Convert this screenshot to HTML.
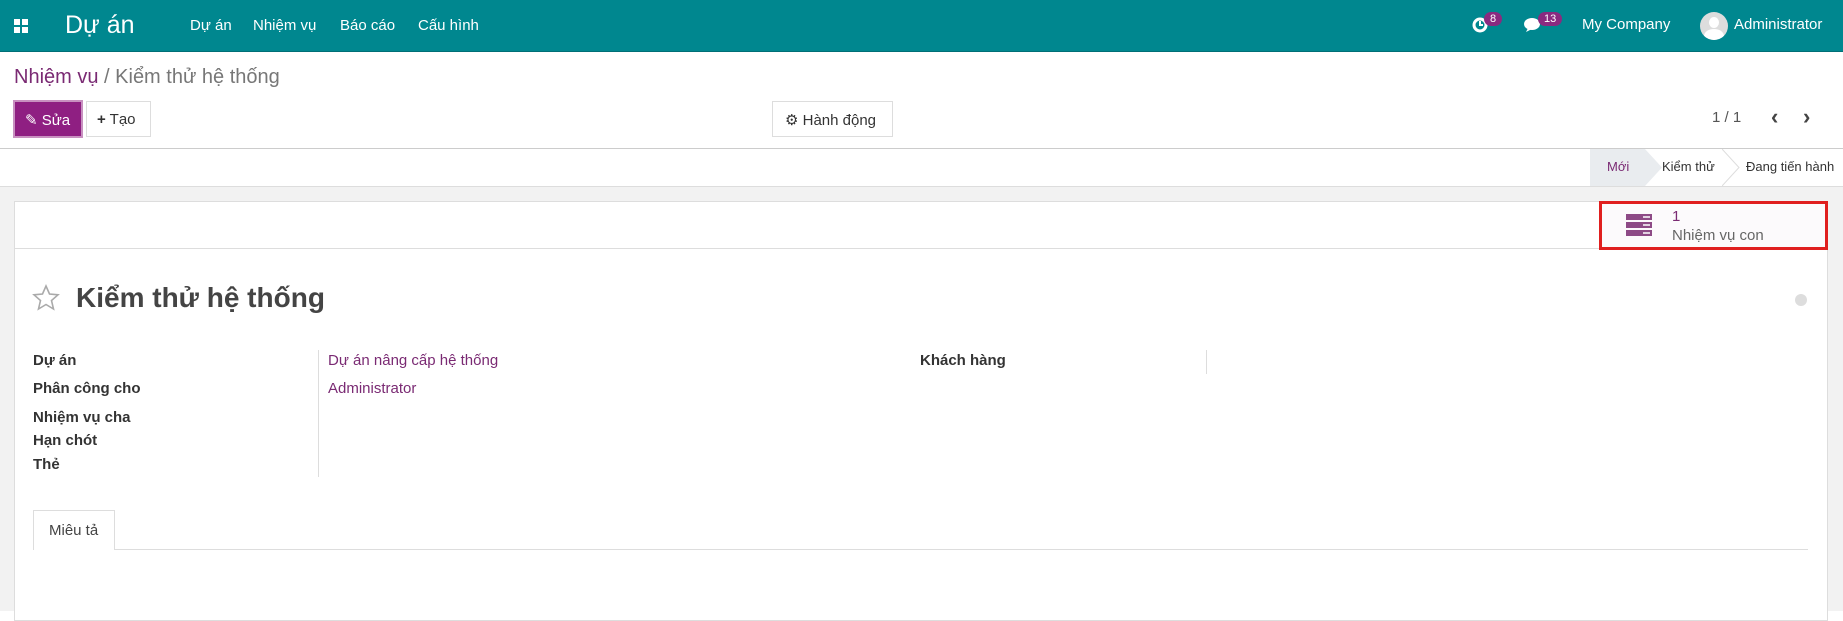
<!DOCTYPE html>
<html><head><meta charset="utf-8"><style>
*{box-sizing:border-box;margin:0;padding:0}
body{width:1843px;height:611px;overflow:hidden;font-family:"Liberation Sans",sans-serif;background:#fff;position:relative;color:#4c4c4c}
.a{position:absolute;white-space:nowrap}
.nav{left:0;top:0;width:1843px;height:52px;background:#00878f;border-bottom:1px solid #006f76}
.nav .a{color:#fff}
.pu{color:#7a2a73}
.lbl{font-weight:bold;font-size:15px;color:#333}
.badge{background:#8a2a80;color:#fff;border-radius:9px;font-size:11px;padding:1px 6px}
</style></head><body>
<div class="a nav">
  <svg class="a" style="left:14px;top:19px" width="14" height="14"><rect x="0" y="0" width="6" height="6" fill="#fff"/><rect x="8" y="0" width="6" height="6" fill="#fff"/><rect x="0" y="8" width="6" height="6" fill="#fff"/><rect x="8" y="8" width="6" height="6" fill="#fff"/></svg>
  <div class="a" style="left:65px;top:11px;font-size:25px">Dự án</div>
  <div class="a" style="left:190px;top:17px;font-size:15px">Dự án</div>
  <div class="a" style="left:253px;top:17px;font-size:15px">Nhiệm vụ</div>
  <div class="a" style="left:340px;top:17px;font-size:15px">Báo cáo</div>
  <div class="a" style="left:418px;top:17px;font-size:15px">Cấu hình</div>
  <svg class="a" style="left:1472px;top:17px" width="16" height="16"><circle cx="8" cy="8" r="6" fill="none" stroke="#fff" stroke-width="3"/><path d="M8 4v4h3" stroke="#fff" stroke-width="2" fill="none"/></svg>
  <div class="a badge" style="left:1484px;top:12px">8</div>
  <svg class="a" style="left:1524px;top:17px" width="18" height="16"><ellipse cx="8" cy="7" rx="8" ry="6" fill="#fff"/><path d="M4 11l-2 4 6-3z" fill="#fff"/></svg>
  <div class="a badge" style="left:1538px;top:12px">13</div>
  <div class="a" style="left:1582px;top:16px;font-size:15px">My Company</div>
  <div class="a" style="left:1700px;top:12px;width:28px;height:28px;border-radius:50%;background:#ddd;overflow:hidden"><div class="a" style="left:9px;top:5px;width:10px;height:11px;border-radius:50%;background:#fff"></div><div class="a" style="left:4px;top:17px;width:20px;height:14px;border-radius:50%;background:#fff"></div></div>
  <div class="a" style="left:1734px;top:16px;font-size:15px">Administrator</div>
</div>
<div class="a" style="left:14px;top:66px;font-size:20px;color:#777"><span class="pu">Nhiệm vụ</span> / Kiểm thử hệ thống</div>
<div class="a" style="left:13px;top:100px;width:70px;height:38px;background:#8f1f82;border:2px solid #c890c0;color:#fff;font-size:15px;padding:9px 0 0 10px">✎ Sửa</div>
<div class="a" style="left:86px;top:101px;width:65px;height:36px;border:1px solid #ddd;font-size:15px;color:#333;padding:9px 0 0 10px"><b>+</b> Tạo</div>
<div class="a" style="left:772px;top:101px;width:121px;height:36px;border:1px solid #ddd;font-size:15px;color:#333;padding:9px 0 0 12px">⚙ Hành động</div>
<div class="a" style="left:1712px;top:109px;font-size:15px;color:#555">1 / 1</div>
<div class="a" style="left:1771px;top:104px;font-size:22px;color:#444;font-weight:bold">‹</div>
<div class="a" style="left:1803px;top:104px;font-size:22px;color:#444;font-weight:bold">›</div>
<div class="a" style="left:0;top:148px;width:1843px;height:1px;background:#ccc"></div>
<div class="a" style="left:1590px;top:149px;width:55px;height:37px;background:#e9ecef"></div>
<svg class="a" style="left:1645px;top:149px" width="20" height="37"><path d="M0 0L17 18.5 0 37z" fill="#e9ecef"/></svg>
<svg class="a" style="left:1722px;top:149px" width="20" height="37"><path d="M0 0L17 18.5 0 37" fill="none" stroke="#ddd"/></svg>
<div class="a" style="left:1607px;top:159px;font-size:13px;color:#7a2a73">Mới</div>
<div class="a" style="left:1662px;top:159px;font-size:13px;color:#333">Kiểm thử</div>
<div class="a" style="left:1746px;top:159px;font-size:13px;color:#333">Đang tiến hành</div>
<div class="a" style="left:0;top:186px;width:1843px;height:425px;background:#f2f2f2;border-top:1px solid #ddd"></div>
<div class="a" style="left:14px;top:201px;width:1814px;height:420px;background:#fff;border:1px solid #ddd"></div>
<div class="a" style="left:14px;top:248px;width:1814px;height:1px;background:#ddd"></div>
<div class="a" style="left:1599px;top:201px;width:229px;height:49px;border:3px solid #e01f1f;background:#fcfafc"></div>
<svg class="a" style="left:1626px;top:214px" width="26" height="22"><rect x="0" y="0" width="26" height="6" fill="#8d4a86"/><rect x="0" y="8" width="26" height="6" fill="#8d4a86"/><rect x="0" y="16" width="26" height="6" fill="#8d4a86"/><path d="M17 3h7M17 11h7M17 19h7" stroke="#fff" stroke-width="1.5"/></svg>
<div class="a" style="left:1672px;top:208px;font-size:15px;color:#7a2a73">1</div>
<div class="a" style="left:1672px;top:227px;font-size:15px;color:#666">Nhiệm vụ con</div>
<svg class="a" style="left:32px;top:284px" width="28" height="28"><path d="M14 2l3.5 8 8.5.8-6.5 5.7 2 8.5L14 20.5 6.5 25l2-8.5L2 10.8l8.5-.8z" fill="none" stroke="#aaa" stroke-width="1.6"/></svg>
<div class="a" style="left:76px;top:282px;font-size:28px;font-weight:bold;color:#444">Kiểm thử hệ thống</div>
<div class="a" style="left:1795px;top:294px;width:12px;height:12px;border-radius:50%;background:#ddd"></div>
<div class="a lbl" style="left:33px;top:352px">Dự án</div>
<div class="a lbl" style="left:33px;top:380px">Phân công cho</div>
<div class="a lbl" style="left:33px;top:409px">Nhiệm vụ cha</div>
<div class="a lbl" style="left:33px;top:432px">Hạn chót</div>
<div class="a lbl" style="left:33px;top:456px">Thẻ</div>
<div class="a" style="left:318px;top:350px;width:1px;height:127px;background:#ddd"></div>
<div class="a pu" style="left:328px;top:352px;font-size:15px">Dự án nâng cấp hệ thống</div>
<div class="a pu" style="left:328px;top:380px;font-size:15px">Administrator</div>
<div class="a lbl" style="left:920px;top:352px">Khách hàng</div>
<div class="a" style="left:1206px;top:350px;width:1px;height:24px;background:#ddd"></div>
<div class="a" style="left:33px;top:549px;width:1775px;height:1px;background:#ddd"></div>
<div class="a" style="left:33px;top:510px;width:82px;height:40px;background:#fff;border:1px solid #ddd;border-bottom:none;font-size:15px;color:#444;padding:11px 0 0 15px">Miêu tả</div>
</body></html>
